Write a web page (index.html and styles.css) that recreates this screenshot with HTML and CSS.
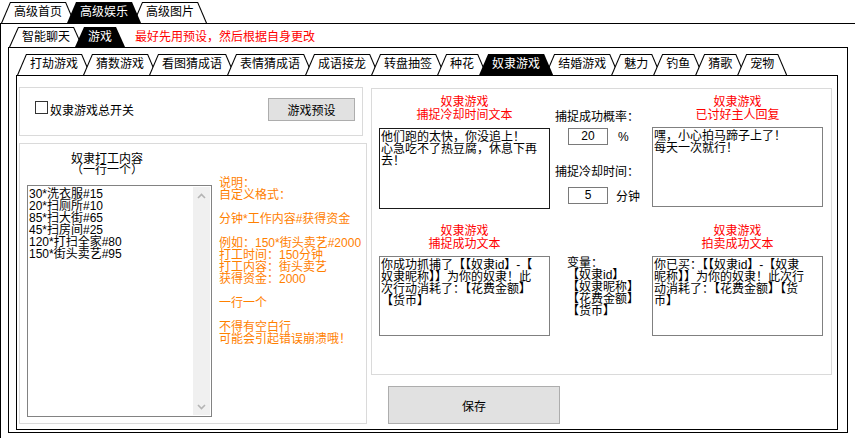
FILE: index.html
```html
<!DOCTYPE html>
<html lang="zh-CN">
<head>
<meta charset="utf-8">
<title>奴隶游戏</title>
<link rel="stylesheet" href="styles.css">
</head>
<body>
<div class="app">
  <div class="tabs tabs-l1">
    <div class="tab">高级首页</div>
    <div class="tab active">高级娱乐</div>
    <div class="tab">高级图片</div>
  </div>
  <div class="frame frame-l1">
    <div class="tabs tabs-l2">
      <div class="tab">智能聊天</div>
      <div class="tab active">游戏</div>
      <div class="hint">最好先用预设，然后根据自身更改</div>
    </div>
    <div class="frame frame-l2">
      <div class="tabs tabs-l3">
        <div class="tab">打劫游戏</div>
        <div class="tab">猜数游戏</div>
        <div class="tab">看图猜成语</div>
        <div class="tab">表情猜成语</div>
        <div class="tab">成语接龙</div>
        <div class="tab">转盘抽签</div>
        <div class="tab">种花</div>
        <div class="tab active">奴隶游戏</div>
        <div class="tab">结婚游戏</div>
        <div class="tab">魅力</div>
        <div class="tab">钓鱼</div>
        <div class="tab">猜歌</div>
        <div class="tab">宠物</div>
      </div>
      <div class="frame frame-l3">
        <div class="left-col">
          <div class="panel panel-switch">
            <span class="checkbox"></span>
            <span class="check-label">奴隶游戏总开关</span>
            <div class="btn btn-preset">游戏预设</div>
          </div>
          <div class="panel panel-work">
            <div class="work-title"><div class="ln">奴隶打工内容</div><div class="ln">（一行一个）</div></div>
            <div class="work-row">
              <div class="listbox">
                <div class="listbox-text"><div class="ln">30*洗衣服#15</div><div class="ln">20*扫厕所#10</div><div class="ln">85*扫大街#65</div><div class="ln">45*扫房间#25</div><div class="ln">120*打扫全家#80</div><div class="ln">150*街头卖艺#95</div></div>
                <div class="scrollbar">
                  <svg class="chev" width="9" height="6" viewBox="0 0 9 6"><path d="M1 5 L4.5 1.5 L8 5" fill="none" stroke="#b4b4b4" stroke-width="1.6"/></svg>
                  <svg class="chev" width="9" height="6" viewBox="0 0 9 6"><path d="M1 1 L4.5 4.5 L8 1" fill="none" stroke="#b4b4b4" stroke-width="1.6"/></svg>
                </div>
              </div>
              <div class="notes">
                <div class="ln">说明：</div>
                <div class="ln">自定义格式：</div>
                <div class="ln"></div>
                <div class="ln">分钟*工作内容#获得资金</div>
                <div class="ln"></div>
                <div class="ln">例如：150*街头卖艺#2000</div>
                <div class="ln">打工时间：150分钟</div>
                <div class="ln">打工内容：街头卖艺</div>
                <div class="ln">获得资金：2000</div>
                <div class="ln"></div>
                <div class="ln">一行一个</div>
                <div class="ln"></div>
                <div class="ln">不得有空白行</div>
                <div class="ln">可能会引起错误崩溃哦！</div>
              </div>
            </div>
          </div>
        </div>
        <div class="right-col">
          <div class="panel panel-texts">
            <div class="trow trow-1">
              <div class="tcol">
                <div class="red-title"><div class="ln">奴隶游戏</div><div class="ln">捕捉冷却时间文本</div></div>
                <div class="textbox textbox-focus"><div class="ln">他们跑的太快，你没追上！</div><div class="ln">心急吃不了热豆腐，休息下再</div><div class="ln">去！</div></div>
              </div>
              <div class="mid">
                <div class="mid-label mid-label-1">捕捉成功概率：</div>
                <div class="input-row input-row-1"><div class="input">20</div><span class="unit unit-pct">%</span></div>
                <div class="mid-label mid-label-2">捕捉冷却时间：</div>
                <div class="input-row input-row-2"><div class="input">5</div><span class="unit unit-min">分钟</span></div>
              </div>
              <div class="tcol">
                <div class="red-title"><div class="ln">奴隶游戏</div><div class="ln">已讨好主人回复</div></div>
                <div class="textbox textbox-short"><div class="ln">嘿，小心拍马蹄子上了！</div><div class="ln">每天一次就行！</div></div>
              </div>
            </div>
            <div class="trow trow-2">
              <div class="tcol">
                <div class="red-title"><div class="ln">奴隶游戏</div><div class="ln">捕捉成功文本</div></div>
                <div class="textbox textbox-low"><div class="ln">你成功抓捕了【【奴隶id】-【</div><div class="ln">奴隶昵称】】为你的奴隶！此</div><div class="ln">次行动消耗了：【花费金额】</div><div class="ln">【货币】</div></div>
              </div>
              <div class="mid">
                <div class="vars"><div class="ln">变量：</div><div class="ln">【奴隶id】</div><div class="ln">【奴隶昵称】</div><div class="ln">【花费金额】</div><div class="ln">【货币】</div></div>
              </div>
              <div class="tcol">
                <div class="red-title"><div class="ln">奴隶游戏</div><div class="ln">拍卖成功文本</div></div>
                <div class="textbox textbox-low"><div class="ln">你已买：【【奴隶id】-【奴隶</div><div class="ln">昵称】】为你的奴隶！此次行</div><div class="ln">动消耗了：【花费金额】【货</div><div class="ln">币】</div></div>
              </div>
            </div>
          </div>
          <div class="btn btn-save">保存</div>
        </div>
      </div>
    </div>
  </div>
</div>
</body>
</html>
```

FILE: styles.css
```css
* { box-sizing: border-box; }
html, body { margin: 0; padding: 0; background: #fff; }
body {
  font-family: "Liberation Sans", "Noto Sans CJK SC", sans-serif;
  font-size: 12px;
  color: #000;
  width: 855px;
  height: 438px;
  overflow: hidden;
}
.app { padding-top: 2px; }
.ln { height: 12px; line-height: 12px; white-space: nowrap; }

/* tabs */
.tabs { display: flex; align-items: flex-end; height: 21px; }
.tabs-l1 { padding-left: 1px; }
.tabs-l2 { padding-left: 1px; height: 20px; }
.tabs-l3 { padding-left: 1px; }
.tab {
  position: relative;
  z-index: 0;
  height: 100%;
  line-height: 21px;
  padding: 0 13px;
  margin-right: -8px;
  white-space: nowrap;
}
.tabs-l2 .tab { line-height: 20px; }
.tab::before, .tab::after {
  content: "";
  position: absolute;
  inset: 0;
  z-index: -1;
}
.tab::before {
  background: #000;
  clip-path: polygon(0 100%, 9px 0, calc(100% - 9px) 0, 100% 100%);
}
.tab::after {
  background: #fff;
  clip-path: polygon(1.2px 100%, 9.7px 1px, calc(100% - 9.7px) 1px, calc(100% - 1.2px) 100%);
}
.tab.active { z-index: 1; color: #fff; }
.tab.active::after { display: none; }
.hint { color: #ff0000; margin-left: 18px; line-height: 20px; white-space: nowrap; }

/* frames */
.frame-l1 {
  border-top: 1px solid #000;
  border-left: 1px solid #000;
  height: 415px;
  padding: 3px 0 0 7px;
}
.frame-l2 {
  width: 840px;
  height: 386px;
  border: 1px solid #000;
  padding: 6px 0 0 7px;
}
.frame-l3 {
  width: 822px;
  height: 355px;
  border: 1px solid #000;
  display: flex;
  align-items: flex-start;
}

/* panels */
.panel { border: 1px solid #dadada; }
.left-col { margin-left: 2px; width: 348px; }
.panel-switch {
  width: 344px;
  height: 49px;
  margin-top: 11px;
  display: flex;
  align-items: center;
  padding: 0 7px 5px 15px;
}
.checkbox {
  width: 13px;
  height: 13px;
  border: 1px solid #333;
  background: #fff;
  margin-top: -3px;
}
.check-label { margin-left: 2px; }
.btn {
  background: #e1e1e1;
  border: 1px solid #adadad;
  display: flex;
  align-items: center;
  justify-content: center;
}
.btn-preset { margin-left: auto; width: 87px; height: 23px; }

.panel-work {
  width: 348px;
  height: 281px;
  margin-top: 7px;
  padding: 10px 0 0 7px;
}
.work-title { width: 160px; text-align: center; }
.work-title .ln { height: 11px; line-height: 11px; }
.work-row { display: flex; align-items: flex-start; margin-top: 1px; }
.listbox {
  margin-top: 8px;
  width: 185px;
  height: 232px;
  border: 1px solid #828282;
  padding: 1px;
  display: flex;
}
.listbox-text { flex: 1; padding-top: 1px; }
.scrollbar {
  width: 17px;
  background: #f0f0f0;
  display: flex;
  flex-direction: column;
  justify-content: space-between;
  align-items: center;
  padding: 6px 0 5px;
}
.chev { display: block; }
.notes { margin-left: 7px; color: #ff8000; }

.right-col { margin-left: 4px; }
.panel-texts {
  width: 461px;
  height: 287px;
  margin-top: 12px;
  padding: 7px 0 0 7px;
}
.trow { display: flex; align-items: flex-start; }
.trow-2 { margin-top: 16px; }
.tcol { width: 171px; }
.red-title { color: #ff0000; text-align: center; }
.red-title .ln { height: 13px; line-height: 13px; }
.textbox {
  margin-top: 6px;
  width: 171px;
  height: 81px;
  border: 1px solid #808080;
  padding: 2px 1px;
  overflow: hidden;
}
.textbox-focus { border-color: #1a1a1a; }
.textbox-short { margin-top: 5px; height: 80px; }
.textbox-low { margin-top: 5px; height: 80px; }
.mid { width: 102px; padding-left: 5px; }
.mid-label { line-height: 14px; white-space: nowrap; }
.mid-label-1 { margin-top: 14px; }
.mid-label-2 { margin-top: 20px; }
.input-row { display: flex; align-items: center; }
.input-row-1 { margin-top: 4px; }
.input-row-2 { margin-top: 8px; }
.input {
  margin-left: 13px;
  width: 40px;
  height: 17px;
  border: 1px solid #7a7a7a;
  text-align: center;
  line-height: 15px;
}
.unit-pct { margin-left: 10px; }
.unit-min { margin-left: 8px; }
.vars { margin-top: 32px; margin-left: 12px; }

.btn-save {
  margin-top: 11px;
  margin-left: 17px;
  width: 172px;
  height: 38px;
}
```
